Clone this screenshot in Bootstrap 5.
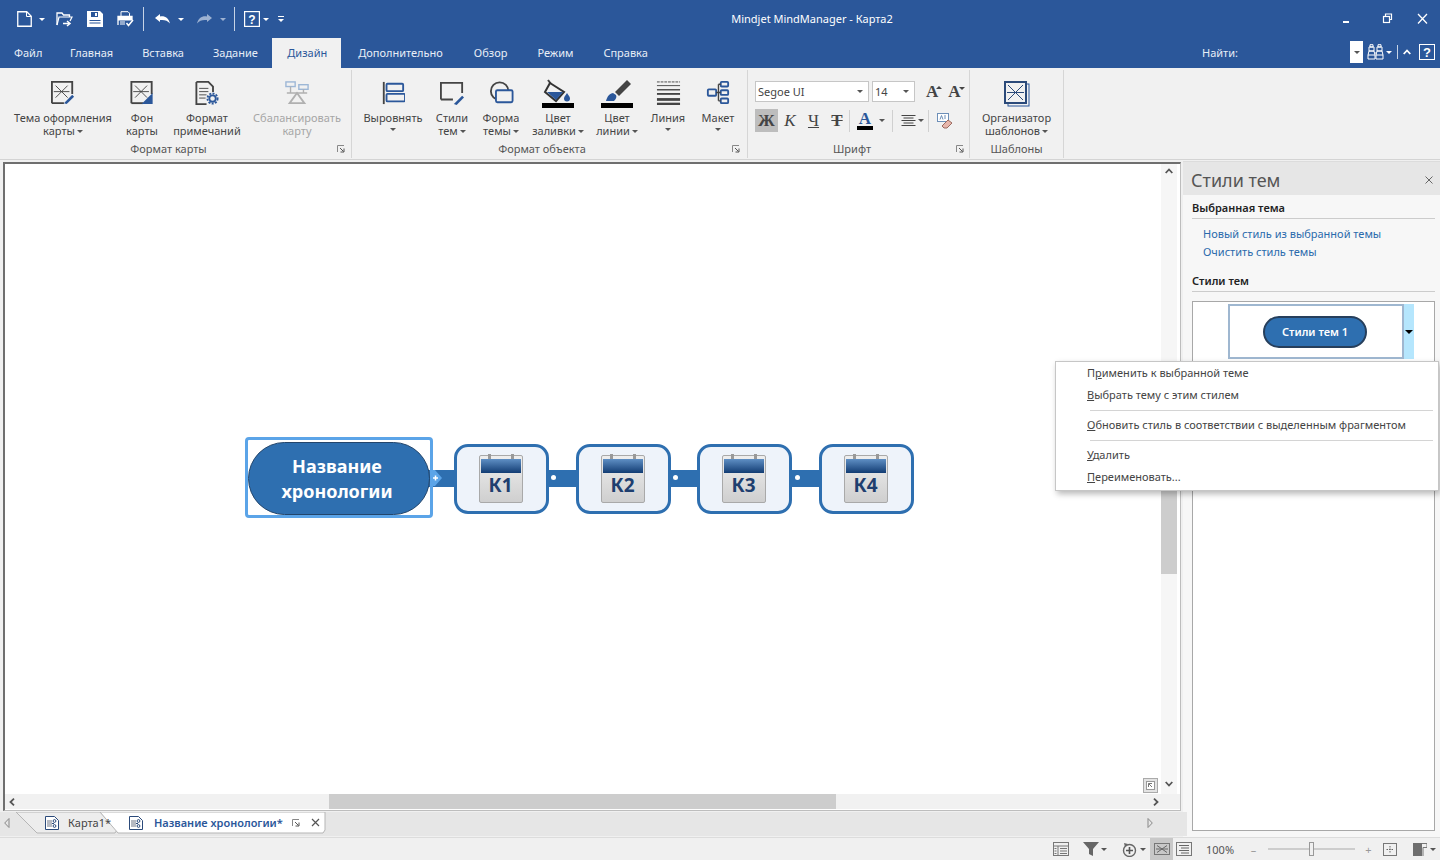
<!DOCTYPE html>
<html lang="ru">
<head>
<meta charset="utf-8">
<title>Mindjet MindManager - Карта2</title>
<link href="https://cdn.jsdelivr.net/npm/bootstrap@5.3.0/dist/css/bootstrap.min.css" rel="stylesheet">
<style>
html,body{height:100%;overflow:hidden}
body{font-family:"Noto Sans","Open Sans",sans-serif;font-size:11px;line-height:13px;color:#444;background:#f0f0f0}
svg{display:block;flex:none}
.ml-2{margin-left:2px}.ml-3{margin-left:3px}.ml-4{margin-left:4px}.ml-6{margin-left:6px}.ml-7{margin-left:7px}.ml-8{margin-left:8px}.ml-9{margin-left:9px}.ml-10{margin-left:10px}.ml-11{margin-left:11px}.ml-13{margin-left:13px}.ml-14{margin-left:14px}.ml-15{margin-left:15px}.ml-16{margin-left:16px}.ml-18{margin-left:18px}
.app-shell{width:1440px;height:860px;position:relative}
.title-bar{height:38px;background:#2b579a;color:#fff;padding-left:17px}
.qat-sep{width:1px;height:24px;background:#c6d3e6}
.caret-w{width:0;height:0;border-left:3px solid transparent;border-right:3px solid transparent;border-top:3px solid #fff;flex:none}
.caret-g{width:0;height:0;border-left:3px solid transparent;border-right:3px solid transparent;border-top:3px solid #555;flex:none}
.caret-dim{border-top-color:#9db2d2}
.win-title{left:0;right:0;top:0;margin-left:184px;text-align:center;font-size:11px;line-height:38px;color:#fff}
.win-btns{gap:23px;padding-right:10px}
.tab-bar{height:30px;background:#2b579a}
.tab-bar .nav-link{height:30px;padding:8px 15px 0;font-size:11px;line-height:14px;color:#e8eef7;margin:0;border:0}
.tab-bar .nav-link.first-tab{padding:8px 13px 0 14px}
.tab-bar .nav-link.pre-tab{padding-left:14.5px;padding-right:14.5px}
.tab-bar .nav-link.active{background:#f1f1f1;color:#2b579a;margin-right:2px;padding-right:14px}
.tab-bar .nav-link.long-tab{padding-right:16px}
.find-area{height:30px;padding:0 5px 2px 0}
.find-label{color:#e8eef7;width:148px}
.find-box{width:13px;height:22px;background:#fff;margin-right:4px}
.vline-w{width:1px;height:14px;background:#c6d3e6;margin:0 5px}
.ribbon{height:92px;background:#f1f1f1;border-bottom:1px solid #d4d4d4}
.rb-group{height:88px;margin-top:2px;border-right:1px solid #d6d6d6}
.rb-items{height:72px}
.g-a{width:352px;padding-left:8px}
.g-b{width:396px;padding-left:8px}
.g-c{width:222px}
.g-d{width:94px}
.rb-item{padding-top:7px;text-align:center;white-space:nowrap}
.rb-icon{height:34px;padding-top:4px}
.rb-icon.tall{padding-top:2px}
.rb-item .caret-g{margin:4px auto 0}
.rb-item .caret-in{display:inline-block;vertical-align:2px;margin:0 0 0 2px}
.w110{width:110px}.w48{width:48px}.w82{width:82px}.w98{width:98px}.w66{width:66px}.w52{width:52px}.w46{width:46px}.w68{width:68px}.w50{width:50px}.w94{width:94px}
.muted-txt{color:#a6a6a6}
.rb-cap{height:14px;color:#555;text-align:center}
.g-a .rb-cap{margin-left:-8px;padding-right:4px}
.g-b .rb-cap{margin-left:-8px;padding-right:5px}
.g-c .rb-cap{padding-right:3px}
.launch{width:10px}
.font-rows{padding:11px 0 0 7px;height:72px}
.combo{height:21px;background:#fff;border:1px solid #c6c6c6;font-size:11px;line-height:19px;padding:0 5px 0 2px;margin-right:3px}
.combo-a{width:114px}.combo-b{width:43px}
.grow-a{font-family:"Liberation Serif",serif;font-weight:700;font-size:17px;line-height:20px;color:#444}
.tri-s{margin:0 0 8px -2px}
.fmt-row{height:23px;margin-top:7px}
.fmt-btn{height:23px;width:23px;font-family:"Liberation Serif",serif;font-size:17px;line-height:23px;text-align:center;color:#444}
.fmt-wide{width:24px}
.fmt-on{background:#bdbdbd;font-weight:700}
.fmt-sep{width:1px;height:22px;background:#d0d0d0}
.work{height:677px}
.doc-col{width:1183px;padding-top:2px}
.canvas-frame{margin-left:3px;height:649px;width:1178px;border-top:2px solid #6f6f6f;border-left:2px solid #6f6f6f;border-right:1px solid #bdbdbd;border-bottom:1px solid #bdbdbd;background:#fff}
.canvas-row{height:630px}
.canvas-area{width:1156px}
.v-scroll{width:16px;background:#f6f6f6}
.v-track{height:610px;padding-top:196px}
.v-thumb{height:200px;background:#cdcdcd;margin-bottom:auto}
.v-down{margin:auto 0 7px}
.h-scroll{height:15px;background:#f1f1f1}
.h-track{width:1130px;height:15px;padding-left:314px}
.h-thumb{width:507px;height:15px;background:#cdcdcd}
.diagram{left:240px;top:273px;width:680px;height:82px}
.conn{left:180px;top:33px;width:400px;height:17px;background:#2e6fb0}
.sel-box{left:0;top:0;width:188px;height:81px;border:3px solid #5ba4e8;border-radius:4px}
.root-pill{left:3px;top:5px;width:182px;height:73px;background:#2e6fb0;border:1px solid #23456b;border-radius:37px;color:#fff;font-weight:700;font-size:18px;line-height:25px;text-align:center;padding-right:4px}
.dia-plus{left:186px;top:33px}
.cal-node{top:7px;width:95px;height:70px;background:#eef3fa;border:3px solid #2e6fb0;border-radius:14px;padding-right:2px}
.n1{left:209px}.n2{left:331px}.n3{left:452px}.n4{left:574px}
.cal-face{position:relative;width:44px;height:48px;border:1px solid #a9a9a9;border-radius:2px;background:linear-gradient(#eee,#cfcfcf);color:#1f3f6f;font-weight:700;font-size:19px;line-height:25px;text-align:center}
.cal-face::before{content:"";position:absolute;left:8px;right:8px;top:-2px;height:5px;border-left:3px solid #999;border-right:3px solid #999}
.cal-head{height:14px;margin:3px 1px 0;background:linear-gradient(#5f8fc4,#123c73)}
.dot-w{top:38px;width:5px;height:5px;background:#fff;border-radius:50%}
.d1{left:306px}.d2{left:428px}.d3{left:550px}
.ov-btn{right:3px;bottom:1px;width:15px;height:15px;background:#e3e3e3;border:1px solid #aaa;padding:2px}
.tab-strip{height:24px;margin-top:1px;background:#e6e6e6;width:1187px}
.tab-shapes{left:0;top:0}
.tab-text{z-index:1;height:21px}
.t-arrow{width:34px}
.t-name-a{width:68px;padding-left:8px}
.t-name-b{width:148px;padding-left:10px;color:#2b579a;font-weight:600;white-space:nowrap}
.t-right{margin:0 34px 0 auto}
.pane{width:257px;background:#f7f7f7;border-top:1px solid #dcdcdc;margin-top:1px;padding-left:3px}
.pane-head{height:33px;background:#e6e6e6;padding:2px 7px 0 8px;margin-left:-3px;font-size:18px;color:#555;line-height:24px;font-weight:400}
.pane-sect{font-weight:600;color:#222;height:19px;margin:5px 5px 0 6px;border-bottom:1px solid #ccc;padding-top:1px;font-size:11px;line-height:14px}
.pane-sect2{margin-top:12px}
.pane-link{color:#2a6aac;text-decoration:none;display:block;height:18px;line-height:18px;margin-left:17px}
.pane-link.first{margin-top:6px}
.style-box{margin:9px 5px 5px 6px;height:530px;background:#fff;border:1px solid #a8a8a8;padding:2px 0 0 35px}
.style-thumb{width:176px;height:55px;border:2px solid #9fb7d0;background:#fff;padding-right:2px}
.style-pill{width:104px;height:32px;background:#2e6fb0;border:2px solid #263f5c;border-radius:16px;color:#fff;font-weight:600;font-size:11px}
.style-drop{width:10px;height:55px;background:#b5e6fd}
.style-drop .arr{width:0;height:0;border-left:4px solid transparent;border-right:4px solid transparent;border-top:4px solid #000}
.ctx-menu{position:absolute;left:1055px;top:361px;width:384px;height:130px;border-radius:0;border:1px solid #c6c6c6;padding:0;margin:0;background:#fff;box-shadow:2px 3px 6px rgba(0,0,0,.28);font-size:11px;color:#444;display:block;z-index:20}
.ctx-menu .dropdown-item{height:22px;line-height:22px;padding:0 0 0 31px;color:#444;font-size:11px}
.ctx-menu .dropdown-divider{margin:4px 5px 3px 34px;border-top:1px solid #d4d4d4;opacity:1}
.status{height:23px;background:#f0f0f0;border-top:1px solid #dcdcdc;padding-right:4px}
.st-hl{width:23px;height:22px;background:#c8c8c8}
.st-pct{width:26px;color:#555}
.st-sign{width:7px;color:#999;text-align:center}
</style>
</head>
<body>
<svg width="0" height="0" class="position-absolute">
  <symbol id="mapdoc" viewBox="0 0 16 16"><path d="M1.500 1.500h9l4 4v9h-13z" fill="#fff" stroke="#2b4a7a"/><rect x="3" y="5" width="5" height="7" fill="#b6bac2"/><circle cx="10.500" cy="6" r="1.400" fill="none" stroke="#2b4a7a"/><circle cx="10.500" cy="11" r="1.400" fill="none" stroke="#2b4a7a"/><path d="M8 8.500h2" stroke="#2b4a7a"/></symbol>
  <symbol id="lnch" viewBox="0 0 8 8"><path d="M.5 7V.5H7" fill="none" stroke="#888"/><path d="M3 3l3.500 3.500M7 3.500V7H3.500" fill="none" stroke="#555"/></symbol>
</svg>
<div class="app-shell d-flex flex-column">

  <header class="title-bar d-flex align-items-center position-relative">
    <div class="win-title position-absolute">Mindjet MindManager - Карта2</div>
    <div class="d-flex align-items-center position-relative">
      <svg width="15" height="16" viewBox="0 0 15 16"><path d="M.75.75h9l4.500 4.500v10H.75z" fill="none" stroke="#fff" stroke-width="1.300"/><path d="M9.500 1v4.500H14" fill="none" stroke="#fff"/></svg>
      <span class="caret-w ml-7"></span>
      <svg class="ml-11" width="17" height="16" viewBox="0 0 17 16"><path d="M1 14V2h5l1.500 2h6v2" fill="none" stroke="#fff" stroke-width="1.300"/><path d="M1 14l2-8h13l-2 4" fill="none" stroke="#fff" stroke-width="1.200"/><path d="M7 12.500h6M11 10l3 2.500-3 2.500" fill="none" stroke="#fff" stroke-width="1.500"/></svg>
      <svg class="ml-14" width="16" height="16" viewBox="0 0 16 16"><path d="M0 0h13l3 3v13H0z" fill="#fff"/><rect x="4" y="1" width="7" height="5" fill="#2b579a"/><rect x="8" y="2" width="2" height="3" fill="#fff"/><rect x="2.500" y="9" width="11" height="1" fill="#2b579a"/><rect x="2.500" y="11.500" width="11" height="1" fill="#2b579a"/></svg>
      <svg class="ml-14" width="17" height="16" viewBox="0 0 17 16"><path d="M4 5V.7h7l1.500 1.500V5" fill="none" stroke="#fff"/><path d="M1 14V5.500h14V9" fill="none" stroke="#fff" stroke-width="1.300"/><rect x="1" y="5.500" width="14" height="4" fill="#fff"/><path d="M3 11h5M3 13h5" stroke="#fff"/><path d="M9.500 12l2 2.500L16 9" fill="none" stroke="#fff" stroke-width="1.500"/></svg>
      <span class="qat-sep ml-9"></span>
      <svg class="ml-11" width="15" height="12" viewBox="0 0 15 12"><path d="M0 5L5 1v2.500c5-.8 8.500 1.500 10 7-2.500-3-5.500-4-10-3.500V9z" fill="#fff"/></svg>
      <span class="caret-w ml-8"></span>
      <svg class="ml-13" width="15" height="12" viewBox="0 0 15 12"><path d="M15 5l-5-4v2.500C5 2.700 1.500 5 0 10.500c2.500-3 5.500-4 10-3.500V9z" fill="#9db2d2"/></svg>
      <span class="caret-w caret-dim ml-8"></span>
      <span class="qat-sep ml-8"></span>
      <svg class="ml-9" width="16" height="16" viewBox="0 0 16 16"><rect x=".6" y=".6" width="14.800" height="14.800" fill="none" stroke="#fff" stroke-width="1.200"/><text x="8" y="12.500" text-anchor="middle" fill="#fff" font-family="Liberation Sans" font-weight="700" font-size="12">?</text></svg>
      <span class="caret-w ml-3"></span>
      <svg class="ml-9" width="6" height="6" viewBox="0 0 6 6"><path d="M0 0h6v1H0z" fill="#fff"/><path d="M0 3h6L3 6z" fill="#fff"/></svg>
    </div>
    <div class="win-btns d-flex align-items-center ms-auto position-relative">
      <svg width="14" height="12" viewBox="0 0 14 12"><rect x="1" y="8" width="6" height="2" fill="#fff"/></svg>
      <svg width="14" height="12" viewBox="0 0 14 12"><path d="M6.500 3V1h6v5.500H10.500" fill="none" stroke="#fff" stroke-width="1.200"/><rect x="4.500" y="3.500" width="6" height="6" fill="none" stroke="#fff" stroke-width="1.200"/></svg>
      <svg width="14" height="12" viewBox="0 0 14 12"><path d="M2 1l9 9.500M11 1l-9 9.500" stroke="#fff" stroke-width="1.300"/></svg>
    </div>
  </header>

  <nav class="tab-bar nav d-flex flex-nowrap">
    <a class="nav-link first-tab" href="#">Файл</a>
    <a class="nav-link pre-tab" href="#">Главная</a>
    <a class="nav-link pre-tab" href="#">Вставка</a>
    <a class="nav-link pre-tab" href="#">Задание</a>
    <a class="nav-link active" href="#">Дизайн</a>
    <a class="nav-link long-tab" href="#">Дополнительно</a>
    <a class="nav-link" href="#">Обзор</a>
    <a class="nav-link" href="#">Режим</a>
    <a class="nav-link" href="#">Справка</a>
    <div class="find-area d-flex align-items-center ms-auto">
      <span class="find-label">Найти:</span>
      <span class="find-box d-flex align-items-center justify-content-center"><span class="caret-g"></span></span>
      <svg width="17" height="16" viewBox="0 0 17 16"><path d="M1 15v-4l1-4h5l1 4v4zM9 15v-4l1-4h5l1 4v4zM2 3h5v4H2zM10 3h5v4h-5zM3 .7h3v2.300H3zM11 .7h3v2.300h-3zM1 11h7M9 11h7M8 9h1" fill="none" stroke="#fff"/></svg>
      <span class="caret-w ml-2"></span>
      <span class="vline-w"></span>
      <svg class="me-2" width="8" height="6" viewBox="0 0 8 6"><path d="M.7 5L4 1.500 7.300 5" fill="none" stroke="#fff" stroke-width="1.800"/></svg>
      <svg width="16" height="16" viewBox="0 0 16 16"><rect x=".5" y=".5" width="15" height="15" fill="none" stroke="#fff"/><text x="8" y="13" text-anchor="middle" fill="#fff" font-family="Liberation Sans" font-weight="700" font-size="13">?</text></svg>
    </div>
  </nav>

  <section class="ribbon d-flex">
    <div class="rb-group g-a">
      <div class="rb-items d-flex">
        <div class="rb-item w110">
          <div class="rb-icon d-flex justify-content-center"><svg width="24" height="24" viewBox="0 0 26 26"><path d="M1 24V1h22v13M1 24h13" fill="none" stroke="#444" stroke-width="2"/><path d="M5 5l13 13M18 5L5 18M3 11.500h17" stroke="#444"/><path d="M14 24l9-9 2 2-8 8" fill="#2b579a"/></svg></div>
          Тема оформления<br>карты<span class="caret-g caret-in"></span>
        </div>
        <div class="rb-item w48">
          <div class="rb-icon d-flex justify-content-center"><svg width="24" height="24" viewBox="0 0 25 26"><path d="M1 24V1h22v13" fill="none" stroke="#444" stroke-width="2"/><path d="M1 24h13" stroke="#444" stroke-width="2"/><path d="M5 5l13 13M18 5L5 18M3 11.500h17" stroke="#444"/><path d="M12 25l12-12v12z" fill="#2b579a"/></svg></div>
          Фон<br>карты
        </div>
        <div class="rb-item w82">
          <div class="rb-icon d-flex justify-content-center"><svg width="24" height="24" viewBox="0 0 25 26"><path d="M1 1h13l5 5v6M1 1v24h11" fill="none" stroke="#444" stroke-width="2"/><path d="M4 8h10M4 11.500h10M4 15h8M4 18.500h7" stroke="#444"/><circle cx="18.500" cy="19" r="5.500" fill="none" stroke="#2b579a" stroke-width="2" stroke-dasharray="2.200 1.400"/><circle cx="18.500" cy="19" r="3.500" fill="none" stroke="#2b579a" stroke-width="2"/></svg></div>
          Формат<br>примечаний
        </div>
        <div class="rb-item w98 muted-txt">
          <div class="rb-icon d-flex justify-content-center"><svg width="24" height="24" viewBox="0 0 26 26"><rect x="1" y="1" width="10" height="5" fill="none" stroke="#9db7d6" stroke-width="1.500"/><rect x="15" y="4" width="10" height="5" fill="none" stroke="#9db7d6" stroke-width="1.500"/><path d="M2 13h22M6 6v7M20 9v4" stroke="#b0b0b0" stroke-width="1.500"/><path d="M13 13l-8 11h16z" fill="none" stroke="#b0b0b0" stroke-width="2"/></svg></div>
          Сбалансировать<br>карту
        </div>
      </div>
      <div class="rb-cap d-flex"><span class="flex-grow-1">Формат карты</span><span class="launch d-flex align-items-center"><svg width="8" height="8"><use href="#lnch"/></svg></span></div>
    </div>

    <div class="rb-group g-b">
      <div class="rb-items d-flex">
        <div class="rb-item w66">
          <div class="rb-icon d-flex justify-content-center"><svg width="24" height="24" viewBox="0 0 26 26"><path d="M3 1v24" stroke="#444" stroke-width="2"/><rect x="6" y="3" width="18" height="8" rx="1" fill="none" stroke="#2b579a" stroke-width="2"/><rect x="6" y="14" width="20" height="8" rx="1" fill="none" stroke="#2b579a" stroke-width="2"/></svg></div>
          Выровнять<span class="caret-g d-block"></span>
        </div>
        <div class="rb-item w52">
          <div class="rb-icon d-flex justify-content-center"><svg width="26" height="24" viewBox="0 0 26 26"><path d="M1 20V2h23v11M1 20h13" fill="none" stroke="#444" stroke-width="2"/><path d="M15 25l9-9 2 2-8 8z" fill="#2b579a"/></svg></div>
          Стили<br>тем<span class="caret-g caret-in"></span>
        </div>
        <div class="rb-item w46">
          <div class="rb-icon d-flex justify-content-center"><svg width="25" height="24" viewBox="0 0 26 26"><circle cx="11" cy="11" r="9.500" fill="none" stroke="#444" stroke-width="2"/><rect x="7" y="10" width="18" height="13" rx="1.500" fill="#f1f1f1" stroke="#2b579a" stroke-width="2"/></svg></div>
          Форма<br>темы<span class="caret-g caret-in"></span>
        </div>
        <div class="rb-item w68">
          <div class="rb-icon tall d-flex justify-content-center"><svg width="32" height="29" viewBox="0 0 32 29"><path d="M6 1l3 4" stroke="#444" stroke-width="2"/><path d="M8 4l14 9-8 9L3 13z" fill="#f1f1f1" stroke="#333" stroke-width="2"/><path d="M5 13h16l-7 8z" fill="#2b579a"/><path d="M25 14c2 3 3 4 3 5.500a3 3 0 01-6 0C22 18 23 17 25 14z" fill="#2b579a"/><rect y="24" width="32" height="5" fill="#000"/></svg></div>
          Цвет<br>заливки<span class="caret-g caret-in"></span>
        </div>
        <div class="rb-item w50">
          <div class="rb-icon tall d-flex justify-content-center"><svg width="32" height="29" viewBox="0 0 32 29"><path d="M14 13L26 1l4 4-12 12z" fill="#444"/><path d="M12 14c-5 1-6 5-7 8h8c2-2 3-4 2-6z" fill="#2b579a"/><rect y="24" width="32" height="5" fill="#000"/></svg></div>
          Цвет<br>линии<span class="caret-g caret-in"></span>
        </div>
        <div class="rb-item w52">
          <div class="rb-icon d-flex justify-content-center"><svg width="25" height="24" viewBox="0 0 25 26"><path d="M0 1h25" stroke="#444" stroke-dasharray="3 1"/><path d="M0 5h25" stroke="#444"/><path d="M0 9.500h25" stroke="#444" stroke-width="1.500"/><path d="M0 14h25" stroke="#444" stroke-width="2"/><path d="M0 20h25" stroke="#444" stroke-width="3"/><path d="M0 25h25" stroke="#444" stroke-width="3"/></svg></div>
          Линия<span class="caret-g d-block"></span>
        </div>
        <div class="rb-item w48">
          <div class="rb-icon d-flex justify-content-center"><svg width="24" height="24" viewBox="0 0 24 26"><rect x="1" y="9" width="9" height="7" rx="1" fill="none" stroke="#2b579a" stroke-width="2"/><rect x="15" y="1" width="8" height="5" rx="1" fill="none" stroke="#2b579a" stroke-width="2"/><rect x="15" y="10" width="8" height="5" rx="1" fill="none" stroke="#2b579a" stroke-width="2"/><rect x="15" y="19" width="8" height="5" rx="1" fill="none" stroke="#2b579a" stroke-width="2"/><path d="M10 12.500h5M12.500 3.500V21.500M12.500 3.500H15M12.500 21.500H15" stroke="#444" stroke-width="1.500" fill="none"/></svg></div>
          Макет<span class="caret-g d-block"></span>
        </div>
      </div>
      <div class="rb-cap d-flex"><span class="flex-grow-1">Формат объекта</span><span class="launch d-flex align-items-center"><svg width="8" height="8"><use href="#lnch"/></svg></span></div>
    </div>

    <div class="rb-group g-c">
      <div class="rb-items font-rows">
        <div class="d-flex align-items-center">
          <div class="combo combo-a d-flex justify-content-between align-items-center"><span>Segoe UI</span><span class="caret-g"></span></div>
          <div class="combo combo-b d-flex justify-content-between align-items-center"><span>14</span><span class="caret-g"></span></div>
          <span class="grow-a ms-2">A</span><svg width="6" height="6" class="tri-s" viewBox="0 0 6 6"><path d="M0 4l3-3 3 3z" fill="#444"/></svg>
          <span class="grow-a ml-6">A</span><svg width="6" height="6" class="tri-s" viewBox="0 0 6 6"><path d="M0 2l3 3 3-3z" fill="#444"/></svg>
        </div>
        <div class="fmt-row d-flex align-items-center">
          <span class="fmt-btn fmt-on">Ж</span>
          <span class="fmt-btn fmt-wide fst-italic">К</span>
          <span class="fmt-btn text-decoration-underline">Ч</span>
          <span class="fmt-btn fmt-wide text-decoration-line-through fw-bold">Т</span>
          <span class="fmt-sep"></span>
          <svg class="ml-7" width="16" height="22" viewBox="0 0 16 22"><text x="8" y="14" text-anchor="middle" fill="#2b579a" font-family="Liberation Serif" font-weight="700" font-size="17">A</text><rect y="16" width="16" height="4" fill="#000"/></svg>
          <span class="caret-g ml-6"></span>
          <span class="fmt-sep ml-7"></span>
          <svg class="ms-2" width="15" height="12" viewBox="0 0 14 12"><path d="M0 .5h14M2 3h10M0 5.500h14M2 8h10M0 10.500h14" stroke="#444"/></svg>
          <span class="caret-g ml-2"></span>
          <span class="fmt-sep ml-4"></span>
          <svg class="ms-2" width="16" height="16" viewBox="0 0 16 16"><rect x=".5" y=".5" width="11" height="8" fill="#fff" stroke="#6d8fb8"/><path d="M3 6.500l1.500-4 1.500 4M7 3h2M7 5h2" stroke="#6d8fb8" fill="none"/><path d="M5 13l6-6 4 3-5 5H7z" fill="#e7b6ac" stroke="#9b6a60"/></svg>
        </div>
      </div>
      <div class="rb-cap d-flex"><span class="flex-grow-1">Шрифт</span><span class="launch d-flex align-items-center"><svg width="8" height="8"><use href="#lnch"/></svg></span></div>
    </div>

    <div class="rb-group g-d">
      <div class="rb-items d-flex justify-content-center">
        <div class="rb-item w94">
          <div class="rb-icon d-flex justify-content-center"><svg width="26" height="26" viewBox="0 0 26 26"><rect x="4" y="3" width="21" height="22" fill="none" stroke="#2b579a"/><rect x="1" y="1" width="21" height="21" fill="#f1f1f1" stroke="#2b4a7a" stroke-width="2"/><path d="M4 4l15 15M19 4L4 19M3 11.500h17" stroke="#2b4a7a"/></svg></div>
          Организатор<br>шаблонов<span class="caret-g caret-in"></span>
        </div>
      </div>
      <div class="rb-cap">Шаблоны</div>
    </div>
  </section>

  <main class="work d-flex">
    <div class="doc-col d-flex flex-column">
      <div class="canvas-frame d-flex flex-column">
        <div class="canvas-row d-flex">
          <div class="canvas-area position-relative">
            <div class="diagram position-absolute">
              <div class="conn position-absolute"></div>
              <div class="sel-box position-absolute"></div>
              <div class="root-pill position-absolute d-flex align-items-center justify-content-center">Название<br>хронологии</div>
              <svg class="dia-plus position-absolute" width="11" height="16" viewBox="0 0 11 16"><path d="M0 0h4l7 8-7 8H0z" fill="#5ba4e8"/><path d="M2 8h5M4.500 5.500v5" stroke="#fff" stroke-width="1.500"/></svg>
              <div class="cal-node n1 position-absolute d-flex align-items-center justify-content-center"><div class="cal-face"><div class="cal-head"></div>К1</div></div>
              <span class="dot-w d1 position-absolute"></span>
              <div class="cal-node n2 position-absolute d-flex align-items-center justify-content-center"><div class="cal-face"><div class="cal-head"></div>К2</div></div>
              <span class="dot-w d2 position-absolute"></span>
              <div class="cal-node n3 position-absolute d-flex align-items-center justify-content-center"><div class="cal-face"><div class="cal-head"></div>К3</div></div>
              <span class="dot-w d3 position-absolute"></span>
              <div class="cal-node n4 position-absolute d-flex align-items-center justify-content-center"><div class="cal-face"><div class="cal-head"></div>К4</div></div>
            </div>
            <div class="ov-btn position-absolute"><svg width="9" height="9" viewBox="0 0 9 9"><rect x=".5" y=".5" width="8" height="8" fill="#fff" stroke="#999"/><path d="M2.500 6V2.500H6M2.500 2.500L6 6" fill="none" stroke="#777"/></svg></div>
          </div>
          <div class="v-scroll d-flex flex-column align-items-center">
            <svg class="my-1" width="8" height="6" viewBox="0 0 8 6"><path d="M.7 5L4 1.500 7.300 5" fill="none" stroke="#555" stroke-width="1.800"/></svg>
            <div class="v-track w-100"><div class="v-thumb"></div></div>
            <svg class="v-down" width="8" height="6" viewBox="0 0 8 6"><path d="M.7 1L4 4.500 7.300 1" fill="none" stroke="#555" stroke-width="1.800"/></svg>
          </div>
        </div>
        <div class="h-scroll d-flex align-items-center">
          <svg class="ms-1" width="6" height="8" viewBox="0 0 6 8"><path d="M5 .7L1.500 4 5 7.300" fill="none" stroke="#555" stroke-width="1.800"/></svg>
          <div class="h-track"><div class="h-thumb"></div></div>
          <svg class="ms-2" width="6" height="8" viewBox="0 0 6 8"><path d="M1 .7L4.500 4 1 7.300" fill="none" stroke="#555" stroke-width="1.800"/></svg>
        </div>
      </div>
      <div class="tab-strip position-relative">
        <svg class="tab-shapes position-absolute" width="330" height="24" viewBox="0 0 330 24"><path d="M16 0l21 21h78l2-3L100 0z" fill="#ededed" stroke="#b5b5b5"/><path d="M100 0l18 21h205l2-3V0z" fill="#fff" stroke="#b5b5b5"/></svg>
        <div class="tab-text d-flex align-items-center position-relative">
          <svg class="ms-1" width="6" height="10" viewBox="0 0 6 10"><path d="M5 .5L.7 5 5 9.500z" fill="none" stroke="#888"/></svg>
          <span class="t-arrow"></span>
          <svg width="16" height="16"><use href="#mapdoc"/></svg>
          <span class="t-name-a">Карта1*</span>
          <svg width="16" height="16"><use href="#mapdoc"/></svg>
          <span class="t-name-b">Название хронологии*</span>
          <svg width="8" height="8"><use href="#lnch"/></svg>
          <svg class="ml-11" width="9" height="9" viewBox="0 0 9 9"><path d="M1 1l7 7M8 1L1 8" stroke="#555" stroke-width="1.200"/></svg>
          <svg class="t-right" width="6" height="10" viewBox="0 0 6 10"><path d="M1 .5L5.300 5 1 9.500z" fill="none" stroke="#888"/></svg>
        </div>
      </div>
    </div>

    <aside class="pane d-flex flex-column">
      <div class="pane-head d-flex justify-content-between align-items-center"><span>Стили тем</span><svg width="8" height="8" viewBox="0 0 8 8"><path d="M.5.500l7 7M7.500.500l-7 7" stroke="#666"/></svg></div>
      <div class="pane-sect">Выбранная тема</div>
      <a class="pane-link first" href="#">Новый стиль из выбранной темы</a>
      <a class="pane-link" href="#">Очистить стиль темы</a>
      <div class="pane-sect pane-sect2">Стили тем</div>
      <div class="style-box d-flex align-items-start">
        <div class="style-thumb d-flex align-items-center justify-content-center"><div class="style-pill d-flex align-items-center justify-content-center">Стили тем 1</div></div>
        <div class="style-drop d-flex align-items-center justify-content-center"><span class="arr"></span></div>
      </div>
    </aside>
  </main>

  <footer class="status d-flex align-items-center justify-content-end">
    <svg width="16" height="14" viewBox="0 0 16 14"><rect x=".5" y=".5" width="15" height="13" fill="none" stroke="#777"/><path d="M.5 4h15M5 4v9.500M7 6.500h7M7 9h7M7 11.500h7M1.500 6.500h2M1.500 9h2M1.500 11.500h2" stroke="#777"/></svg>
    <svg class="ml-14" width="16" height="14" viewBox="0 0 16 14"><path d="M0 0h16l-6 7v7l-4-2V7z" fill="#666"/></svg>
    <span class="caret-g ml-2"></span>
    <svg class="ml-15" width="15" height="15" viewBox="0 0 15 15"><circle cx="7.500" cy="8.500" r="6" fill="none" stroke="#666" stroke-width="1.400"/><path d="M7.500 5v7M4 8.500h7" stroke="#555" stroke-width="1.600"/><path d="M2 1l4 1-3 3z" fill="#666"/></svg>
    <span class="caret-g ml-3"></span>
    <span class="st-hl ml-4 d-flex align-items-center justify-content-center"><svg width="16" height="12" viewBox="0 0 16 12"><rect x=".5" y=".5" width="15" height="11" fill="none" stroke="#777"/><path d="M3 2.500l10 7M13 2.500l-10 7M2 6h12" stroke="#666"/></svg></span>
    <svg class="ml-3" width="16" height="14" viewBox="0 0 16 14"><rect x=".5" y=".5" width="15" height="13" fill="none" stroke="#777"/><path d="M3 3.500h10M5 6h8M3 8.500h10M5 11h8" stroke="#666"/></svg>
    <span class="st-pct ml-14">100%</span>
    <span class="st-sign ml-18">–</span>
    <svg class="ml-11" width="87" height="14" viewBox="0 0 87 14"><path d="M0 7h87" stroke="#aaa"/><rect x="41.500" y=".5" width="4" height="13" fill="#f0f0f0" stroke="#999"/></svg>
    <span class="st-sign ml-10">+</span>
    <svg class="ml-11" width="14" height="13" viewBox="0 0 14 13"><rect x=".5" y=".5" width="13" height="12" fill="none" stroke="#777"/><path d="M7 3v7M3.500 6.500h7" stroke="#666" stroke-dasharray="1.500 1"/></svg>
    <svg class="ml-16" width="14" height="13" viewBox="0 0 14 13"><rect width="9" height="13" fill="#6e6e6e"/><path d="M9 .5h5v4H10V13" fill="none" stroke="#777"/></svg>
    <span class="caret-g ml-3"></span>
  </footer>

  <ul class="ctx-menu dropdown-menu show list-unstyled">
    <li><a class="dropdown-item" href="#">П<u>р</u>именить к выбранной теме</a></li>
    <li><a class="dropdown-item" href="#"><u>В</u>ыбрать тему с этим стилем</a></li>
    <li><hr class="dropdown-divider"></li>
    <li><a class="dropdown-item" href="#"><u>О</u>бновить стиль в соответствии с выделенным фрагментом</a></li>
    <li><hr class="dropdown-divider"></li>
    <li><a class="dropdown-item" href="#"><u>У</u>далить</a></li>
    <li><a class="dropdown-item" href="#"><u>П</u>ереименовать...</a></li>
  </ul>
</div>
<script src="https://cdn.jsdelivr.net/npm/bootstrap@5.3.0/dist/js/bootstrap.bundle.min.js"></script>
</body>
</html>
